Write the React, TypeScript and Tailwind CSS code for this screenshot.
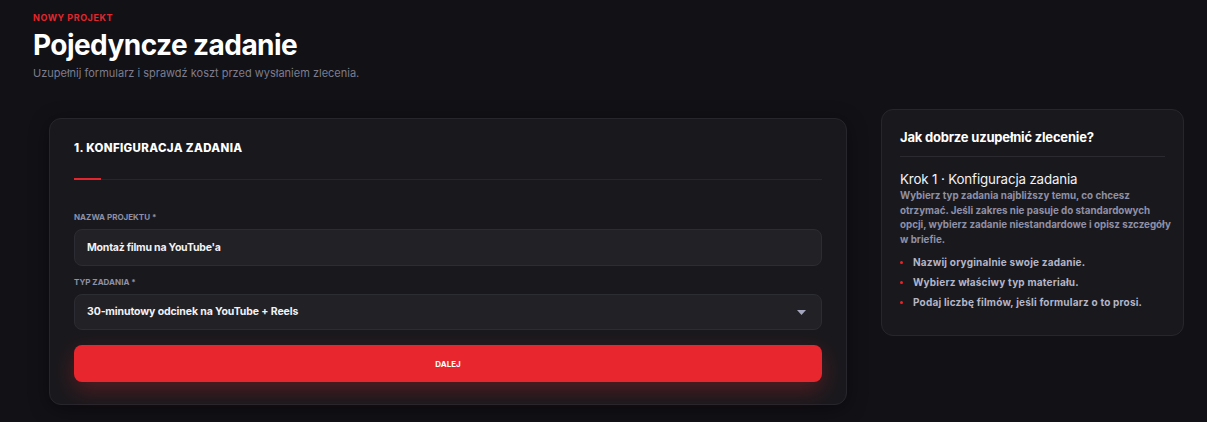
const font = { fontFamily: "Inter, 'Noto Sans', sans-serif" };

const tips = [
  "Nazwij oryginalnie swoje zadanie.",
  "Wybierz właściwy typ materiału.",
  "Podaj liczbę filmów, jeśli formularz o to prosi.",
];

export default function App() {
  return (
    <div
      className="min-h-[422px] bg-[#111116] pl-[33px] pr-[23px] pt-[12px] text-white"
      style={font}
    >
      {/* Page header */}
      <div>
        <span className="block text-[9px] font-bold uppercase tracking-[0.06em] leading-[12px] text-[#e3262d]">
          Nowy projekt
        </span>
        <h1 className="mt-[4px] text-[28px] font-bold leading-[34px] tracking-[-0.02em]">
          Pojedyncze zadanie
        </h1>
        <p className="mt-[3px] text-[11px] leading-[16px] text-[#7d7d8e]">
          Uzupełnij formularz i sprawdź koszt przed wysłaniem zlecenia.
        </p>
      </div>

      <div className="mt-[28px] flex items-start gap-[34px]">
        {/* Form card */}
        <div className="ml-[16px] mt-[9px] w-[798px] shrink-0 rounded-[12px] border border-[#26262c] bg-[#19191d] px-[24px] pb-[22px] pt-[22px] shadow-[0_4px_20px_rgba(0,0,0,0.35)]">
          <h2 className="text-[11.5px] font-extrabold uppercase leading-[14px] tracking-[0.03em]">
            1. Konfiguracja zadania
          </h2>
          <div className="relative mt-[24px] h-px bg-[#26262b]">
            <div className="absolute -top-px left-0 h-[2px] w-[27px] bg-[#e3262d]" />
          </div>

          <label className="mt-[32px] block text-[8px] font-bold uppercase leading-[10px] text-[#8f90a6]">
            Nazwa projektu *
          </label>
          <div className="mt-[7px] flex h-[37px] items-center rounded-[8px] border border-[#2c2c33] bg-[#212126] px-[12px] text-[10.5px] font-bold tracking-[-0.02em] text-[#f2f2f5]">
            Montaż filmu na YouTube'a
          </div>

          <label className="mt-[11px] block text-[8px] font-bold uppercase leading-[10px] text-[#8f90a6]">
            Typ zadania *
          </label>
          <div className="mt-[7px] flex h-[36px] items-center justify-between rounded-[8px] border border-[#2c2c33] bg-[#212126] pl-[12px] pr-[15px] text-[10.5px] font-bold tracking-[-0.01em] text-[#f2f2f5]">
            <span>30‑minutowy odcinek na YouTube + Reels</span>
            <svg width="9" height="5" viewBox="0 0 9 5">
              <path d="M0 0h9L4.5 5z" fill="#a4a6bd" />
            </svg>
          </div>

          <button className="mt-[15px] flex h-[37px] w-full items-center justify-center rounded-[8px] bg-[#e8262d] text-[8px] font-bold uppercase text-white shadow-[0_8px_22px_rgba(232,38,45,0.28)]">
            Dalej
          </button>
        </div>

        {/* Help card */}
        <div className="w-[303px] shrink-0 rounded-[12px] border border-[#26262c] bg-[#19191d] px-[18px] pb-[26px] pt-[19px]">
          <h3 className="text-[13px] font-bold leading-[16px] tracking-[-0.015em]">
            Jak dobrze uzupełnić zlecenie?
          </h3>
          <div className="mt-[11px] h-px bg-[#2a2a30]" />
          <p className="mt-[13px] text-[13.3px] leading-[18px] tracking-[-0.01em] text-[#f2f2f5]">
            Krok 1 · Konfiguracja zadania
          </p>
          <p className="mt-[1px] whitespace-nowrap text-[9.8px] font-bold leading-[14.5px] text-[#8f90a6]">
            Wybierz typ zadania najbliższy temu, co chcesz
            <br />
            otrzymać. Jeśli zakres nie pasuje do standardowych
            <br />
            opcji, wybierz zadanie niestandardowe i opisz szczegóły
            <br />w briefie.
          </p>
          <ul className="mt-[9px] flex flex-col gap-[7px]">
            {tips.map((t) => (
              <li
                key={t}
                className="flex items-center gap-[10px] text-[10px] font-bold leading-[13px] tracking-[0.02em] text-[#b4b5c6]"
              >
                <span className="h-[3px] w-[3px] rounded-full bg-[#e3262d]" />
                {t}
              </li>
            ))}
          </ul>
        </div>
      </div>
    </div>
  );
}
